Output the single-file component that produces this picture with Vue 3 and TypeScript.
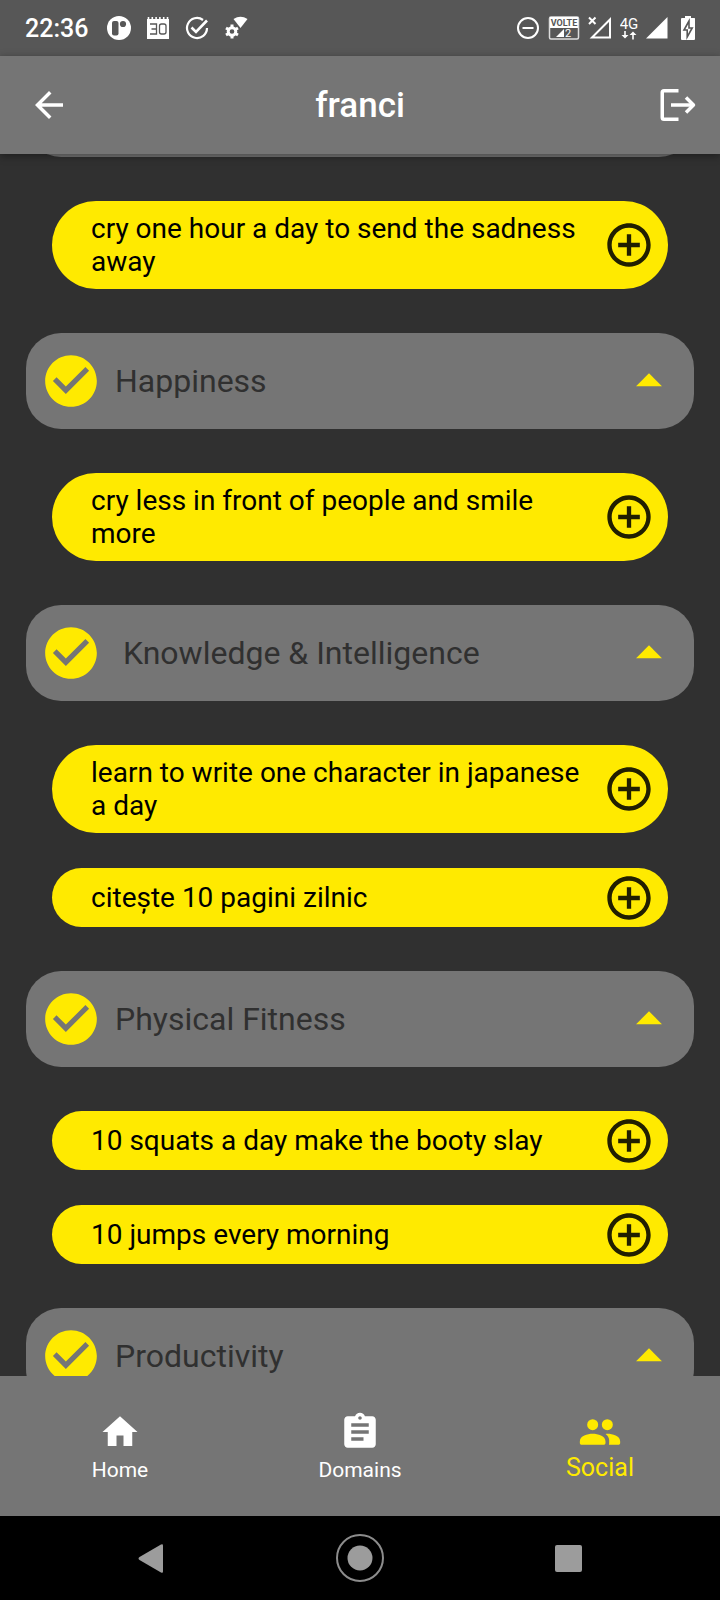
<script setup lang="ts">
import { onMounted, ref } from 'vue'

interface Domain {
  title: string
  goals: string[]
}

const groups = ref<Domain[]>([
  { title: '', goals: ['cry one hour a day to send the sadness away'] },
  { title: 'Happiness', goals: ['cry less in front of people and smile more'] },
  {
    title: ' Knowledge & Intelligence',
    goals: ['learn to write one character in japanese a day', 'citește 10 pagini zilnic'],
  },
  {
    title: 'Physical Fitness',
    goals: ['10 squats a day make the booty slay', '10 jumps every morning'],
  },
  { title: 'Productivity', goals: [] },
])

const list = ref<HTMLElement | null>(null)

onMounted(() => {
  if (list.value) list.value.scrollTop = 93
})
</script>

<template>
  <div class="screen">
    <div class="status">
      <div class="status-side">
        <span class="clock">22:36</span>
        <svg width="24" height="24" viewBox="0 0 24 24">
          <circle cx="12" cy="12" r="12" fill="#fff" />
          <rect x="5" y="5" width="6.5" height="14.5" rx="2" fill="#575757" />
          <circle cx="16" cy="8" r="3.1" fill="#575757" />
        </svg>
        <svg width="24" height="24" viewBox="0 0 24 24">
          <path d="M1 3h22v20H1z" fill="#fff" />
          <path d="M2.5 1v3M6.3 1v3M10.1 1v3M13.9 1v3M17.7 1v3M21.5 1v3" stroke="#fff" stroke-width="1.6" />
          <path d="M4 8h6.500v10H4M5.500 13h5" fill="none" stroke="#575757" stroke-width="1.300" />
          <rect x="13.500" y="8" width="6.500" height="10" rx="2" fill="none" stroke="#575757" stroke-width="1.300" />
        </svg>
        <svg width="24" height="24" viewBox="0 0 24 24">
          <path d="M18 4A10 10 0 1 0 22 12" fill="none" stroke="#fff" stroke-width="2.200" />
          <path d="M6.500 11.500l4.500 4.500L22 4.500" fill="none" stroke="#fff" stroke-width="2.600" />
        </svg>
        <svg width="24" height="24" viewBox="0 0 24 24">
          <path d="M9.500 3Q16.500-1.500 23.500 3L16.500 12z" fill="#fff" />
          <circle cx="8" cy="15.500" r="3.800" fill="none" stroke="#fff" stroke-width="3" />
          <path d="M8 8.500v3M8 19.500v3M2 12l2.600 1.500M11.400 17.500L14 19M2 19l2.600-1.500M11.400 13.500L14 12" stroke="#fff" stroke-width="3" />
        </svg>
      </div>
      <div class="status-side status-right">
        <svg width="24" height="24" viewBox="0 0 24 24" fill="none" stroke="#fff" stroke-width="2">
          <circle cx="12" cy="12" r="10" />
          <path d="M6.500 12h11" />
        </svg>
        <svg width="32" height="24" viewBox="0 0 32 24">
          <rect x="1.500" y="1" width="29" height="22" rx="1.500" fill="none" stroke="#ddd" stroke-width="1.500" />
          <path d="M2 1h28v11H2z" fill="#fff" />
          <text x="16" y="10" text-anchor="middle" class="volte">VOLTE</text>
          <path d="M8 21l8-8v8z" fill="#fff" />
          <text x="17" y="21" class="sim">2</text>
        </svg>
        <svg width="24" height="24" viewBox="0 0 24 24" fill="none" stroke="#fff" stroke-width="2">
          <path d="M4 21.500H22V3.500z" />
          <path d="M1 1.500l6.500 6.500M7.500 1.500L1 8" />
        </svg>
        <svg width="18" height="24" viewBox="0 0 18 24">
          <text x="9" y="13" text-anchor="middle" class="network">4G</text>
          <path d="M5 15v6M13 17.500v6" stroke="#fff" stroke-width="1.600" />
          <path d="M1.500 19h7L5 22.500zM9.500 19h7L13 15.500z" fill="#fff" />
        </svg>
        <svg width="22" height="24" viewBox="0 0 22 24"><path d="M0 22.500H21.500V1z" fill="#fff" /></svg>
        <svg class="battery" width="16" height="24" viewBox="0 0 16 24">
          <path d="M5 0h6v2h3.500Q15 2 15 3v20q0 1-1 1H2q-1 0-1-1V3q0-1 1-1h3z" fill="#fff" />
          <path d="M9 5L4 14h3.200v7L12.200 12H9z" fill="#fff" stroke="#575757" stroke-width="1.600" />
        </svg>
      </div>
    </div>

    <header class="appbar">
      <button class="icon-button back" type="button" aria-label="Back">
        <svg width="42" height="42" viewBox="0 0 24 24">
          <path d="M20 11H7.830l5.590-5.590L12 4l-8 8 8 8 1.410-1.410L7.830 13H20v-2z" fill="#fff" />
        </svg>
      </button>
      <h1>franci</h1>
      <button class="icon-button logout" type="button" aria-label="Log out">
        <svg width="42" height="42" viewBox="0 0 42 42" fill="none" stroke="#fff" stroke-width="3.500">
          <path d="M21.500 6.750H7q-1.750 0-1.750 1.750v25q0 1.750 1.750 1.750h14.500" />
          <path d="M14 21h22.500" />
          <path d="M29 13.500l7.500 7.500-7.500 7.500" stroke-linejoin="round" />
        </svg>
      </button>
    </header>

    <main ref="list" class="list">
      <section v-for="(group, i) in groups" :key="i" class="group">
        <div v-if="!group.title" class="card"></div>
        <button v-else class="card" type="button" aria-expanded="true">
          <svg width="62" height="62" viewBox="0 0 24 24">
            <path d="M12 2C6.480 2 2 6.480 2 12s4.480 10 10 10 10-4.480 10-10S17.520 2 12 2zm-2 15l-5-5 1.410-1.410L10 14.170l7.590-7.590L19 8l-9 9z" fill="#ffea00" />
          </svg>
          <span class="card-title">{{ group.title }}</span>
          <svg width="62" height="62" viewBox="0 0 24 24"><path d="M7 14l5-5 5 5z" fill="#ffea00" /></svg>
        </button>
        <ul v-if="group.goals.length" class="goals">
          <li v-for="goal in group.goals" :key="goal" class="goal">
            <span class="goal-text">{{ goal }}</span>
            <button class="icon-button" type="button" :aria-label="`Add ${goal}`">
              <svg width="52" height="52" viewBox="0 0 24 24">
                <path d="M13 7h-2v4H7v2h4v4h2v-4h4v-2h-4V7zm-1-5C6.480 2 2 6.480 2 12s4.480 10 10 10 10-4.480 10-10S17.520 2 12 2zm0 18c-4.410 0-8-3.590-8-8s3.590-8 8-8 8 3.590 8 8-3.590 8-8 8z" fill="#211f00" />
              </svg>
            </button>
          </li>
        </ul>
      </section>
    </main>

    <nav class="tabs">
      <a href="#home" class="tab">
        <svg width="42" height="42" viewBox="0 0 24 24"><path d="M10 20v-6h4v6h5v-8h3L12 3 2 12h3v8z" /></svg>
        <span>Home</span>
      </a>
      <a href="#domains" class="tab">
        <svg width="42" height="42" viewBox="0 0 24 24">
          <path d="M19 3h-4.180C14.400 1.840 13.300 1 12 1c-1.300 0-2.400.84-2.820 2H5c-1.100 0-2 .9-2 2v14c0 1.100.9 2 2 2h14c1.100 0 2-.9 2-2V5c0-1.100-.9-2-2-2zm-7 0c.55 0 1 .45 1 1s-.45 1-1 1-1-.45-1-1 .45-1 1-1zm2 14H7v-2h7v2zm3-4H7v-2h10v2zm0-4H7V7h10v2z" />
        </svg>
        <span>Domains</span>
      </a>
      <a href="#social" class="tab active" aria-current="page">
        <svg width="44" height="44" viewBox="0 0 24 24">
          <circle cx="8" cy="8" r="3" />
          <circle cx="16" cy="8" r="3" />
          <path d="M8 13c-2.800 0-7 1.100-7 4.200V18c0 .55.45 1 1 1h12c.55 0 1-.45 1-1v-.8c0-3.100-4.200-4.200-7-4.200z" />
          <path d="M16 13c-.3 0-.62.02-.97.05C16.200 13.900 17 15.030 17 16.500V18c0 .35-.07.690-.18 1H22c.55 0 1-.45 1-1v-.8c0-3.100-4.200-4.200-7-4.200z" />
        </svg>
        <span>Social</span>
      </a>
    </nav>

    <div class="system">
      <button class="icon-button" type="button" aria-label="System back">
        <svg width="48" height="48" viewBox="0 0 48 48">
          <path d="M11.500 26Q9.500 24.500 11.500 23L33 10.500q2-1 2 1v26q0 2-2 1z" fill="#9c9c9c" />
        </svg>
      </button>
      <button class="icon-button" type="button" aria-label="System home">
        <svg width="48" height="48" viewBox="0 0 48 48">
          <circle cx="24" cy="24" r="23" fill="none" stroke="#8c8c8c" stroke-width="2" />
          <circle cx="24" cy="24" r="12.500" fill="#9c9c9c" />
        </svg>
      </button>
      <button class="icon-button" type="button" aria-label="Recent apps">
        <svg width="48" height="48" viewBox="0 0 48 48"><rect x="11" y="11" width="27" height="27" rx="2" fill="#9c9c9c" /></svg>
      </button>
    </div>
  </div>
</template>

<style>
body {
  background: #303030;
}
</style>

<style scoped>
.screen {
  display: flex;
  flex-direction: column;
  height: 100vh;
  background: #303030;
  color: #fff;
  font-family: Roboto, "Liberation Sans", sans-serif;
}

svg {
  display: block;
  flex: none;
}

button {
  border: 0;
  margin: 0;
  font: inherit;
  color: inherit;
  text-align: left;
}

.icon-button {
  padding: 0;
  background: none;
}

.status {
  display: flex;
  flex: none;
  justify-content: space-between;
  align-items: center;
  height: 56px;
  padding: 0 24px 0 25px;
  background: #575757;
}

.status-side {
  display: flex;
  align-items: center;
  gap: 15px;
}

.status-right {
  gap: 8px;
}

.battery {
  margin-left: 4px;
}

.clock {
  margin-right: 4px;
  font-size: 25px;
  font-weight: 500;
}

.volte {
  font-size: 9px;
  font-weight: 700;
  fill: #575757;
}

.sim {
  font-size: 11px;
  fill: #fff;
}

.network {
  font-size: 15px;
  fill: #fff;
}

.appbar {
  position: relative;
  z-index: 1;
  display: grid;
  grid-template-columns: 1fr auto 1fr;
  flex: none;
  align-items: center;
  height: 98px;
  padding: 0 21px;
  background: #757575;
  box-shadow: 0 2px 8px rgba(0, 0, 0, 0.4);
}

.back {
  padding-left: 7px;
}

.logout {
  justify-self: end;
}

h1 {
  margin: 0;
  font-size: 35px;
  font-weight: 500;
}

.list {
  flex: 1;
  min-height: 0;
  overflow-y: auto;
  scrollbar-width: none;
}

.group {
  padding: 0 26px;
}

.card {
  box-sizing: border-box;
  display: flex;
  align-items: center;
  gap: 13px;
  width: 100%;
  height: 96px;
  padding: 0 14px;
  border-radius: 35px;
  background: #757575;
}

.card-title {
  flex: 1;
  color: #303030;
  font-size: 32px;
  white-space: pre;
}

.goals {
  display: flex;
  flex-direction: column;
  gap: 35px;
  margin: 0;
  padding: 44px 26px;
  list-style: none;
}

.goal {
  display: flex;
  align-items: center;
  justify-content: space-between;
  gap: 12px;
  min-height: 59px;
  padding: 0 13px 0 39px;
  border-radius: 44px;
  background: #ffea00;
}

.goal-text {
  padding: 11px 0;
  color: #000;
  font-size: 28px;
  line-height: 33px;
}

.tabs {
  display: flex;
  flex: none;
  height: 140px;
  background: #757575;
}

.tab {
  display: flex;
  flex: 1;
  flex-direction: column;
  align-items: center;
  gap: 3px;
  padding-top: 35px;
  color: #fff;
  font-size: 21px;
  line-height: 28px;
  text-decoration: none;
}

.tab svg {
  fill: currentColor;
}

.active {
  gap: 0;
  padding-top: 34px;
  color: #ffea00;
  font-size: 25px;
}

.system {
  display: flex;
  flex: none;
  justify-content: space-between;
  align-items: center;
  height: 84px;
  padding: 0 128px;
  background: #000;
}
</style>
